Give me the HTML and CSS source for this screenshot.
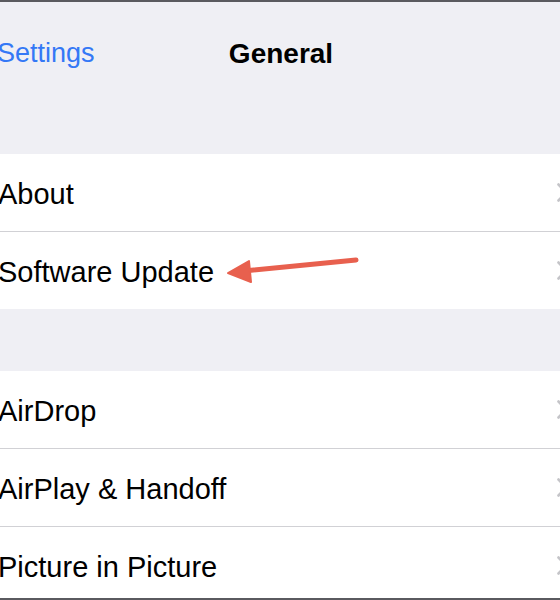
FILE: index.html
```html
<!DOCTYPE html>
<html>
<head>
<meta charset="utf-8">
<link rel="stylesheet" href="styles.css">
</head>
<body>
<div class="screen">
  <header class="nav">
    <span class="back">Settings</span>
    <span class="title">General</span>
  </header>
  <section class="group first">
    <div class="row"><span class="label">About</span><svg class="chev" viewBox="0 0 11 19"><path d="M1.5 1.5 L9 9.5 L1.5 17.5" fill="none" stroke="#c4c4c8" stroke-width="2.6" stroke-linecap="round" stroke-linejoin="round"/></svg></div>
    <div class="row"><span class="label">Software Update</span><svg class="chev" viewBox="0 0 11 19"><path d="M1.5 1.5 L9 9.5 L1.5 17.5" fill="none" stroke="#c4c4c8" stroke-width="2.6" stroke-linecap="round" stroke-linejoin="round"/></svg></div>
  </section>
  <section class="group second">
    <div class="row"><span class="label">AirDrop</span><svg class="chev" viewBox="0 0 11 19"><path d="M1.5 1.5 L9 9.5 L1.5 17.5" fill="none" stroke="#c4c4c8" stroke-width="2.6" stroke-linecap="round" stroke-linejoin="round"/></svg></div>
    <div class="row"><span class="label">AirPlay &amp; Handoff</span><svg class="chev" viewBox="0 0 11 19"><path d="M1.5 1.5 L9 9.5 L1.5 17.5" fill="none" stroke="#c4c4c8" stroke-width="2.6" stroke-linecap="round" stroke-linejoin="round"/></svg></div>
    <div class="row"><span class="label">Picture in Picture</span><svg class="chev" viewBox="0 0 11 19"><path d="M1.5 1.5 L9 9.5 L1.5 17.5" fill="none" stroke="#c4c4c8" stroke-width="2.6" stroke-linecap="round" stroke-linejoin="round"/></svg></div>
  </section>
  <svg class="arrow" width="150" height="40" viewBox="0 0 150 40">
    <path d="M130 10 L18 21" stroke="#e8604e" stroke-width="5" stroke-linecap="round" fill="none"/>
    <path d="M2 23 L23 11 L25 32 Z" fill="#e8604e" stroke="#e8604e" stroke-width="2" stroke-linejoin="round"/>
  </svg>
</div>
</body>
</html>
```
FILE: styles.css
```css
html, body {
  margin: 0;
  padding: 0;
}
body {
  width: 560px;
  height: 600px;
  overflow: hidden;
  background: #efeff4;
  font-family: "Liberation Sans", Arial, sans-serif;
}
.screen {
  position: relative;
  height: 596px;
  border-top: 2px solid #5a5a5f;
  border-bottom: 2px solid #5a5a5f;
  overflow: hidden;
  background: #efeff4;
}
.nav {
  position: relative;
  height: 102px;
}
.nav .back {
  position: absolute;
  left: -3px;
  top: 36px;
  font-size: 27px;
  color: #3478f6;
}
.nav .title {
  position: absolute;
  left: 0;
  right: 0;
  top: 36px;
  text-align: center;
  font-size: 28px;
  font-weight: bold;
  color: #000;
  padding-left: 2px;
}
.group {
  background: #fff;
  display: flex;
  flex-direction: column;
}
.group.first {
  margin-top: 50px;
}
.group.second {
  margin-top: 62px;
}
.row {
  height: 77px;
  display: flex;
  align-items: center;
  justify-content: space-between;
  border-bottom: 1px solid #d1d1d5;
}
.group .row:last-child {
  border-bottom: none;
}
.label {
  margin-left: -2px;
  padding-top: 3px;
  font-size: 29px;
  color: #000;
  white-space: nowrap;
}
.chev {
  width: 11px;
  height: 19px;
  margin-right: -8px;
  flex: none;
}
.arrow {
  position: absolute;
  left: 226px;
  top: 248px;
}
```
